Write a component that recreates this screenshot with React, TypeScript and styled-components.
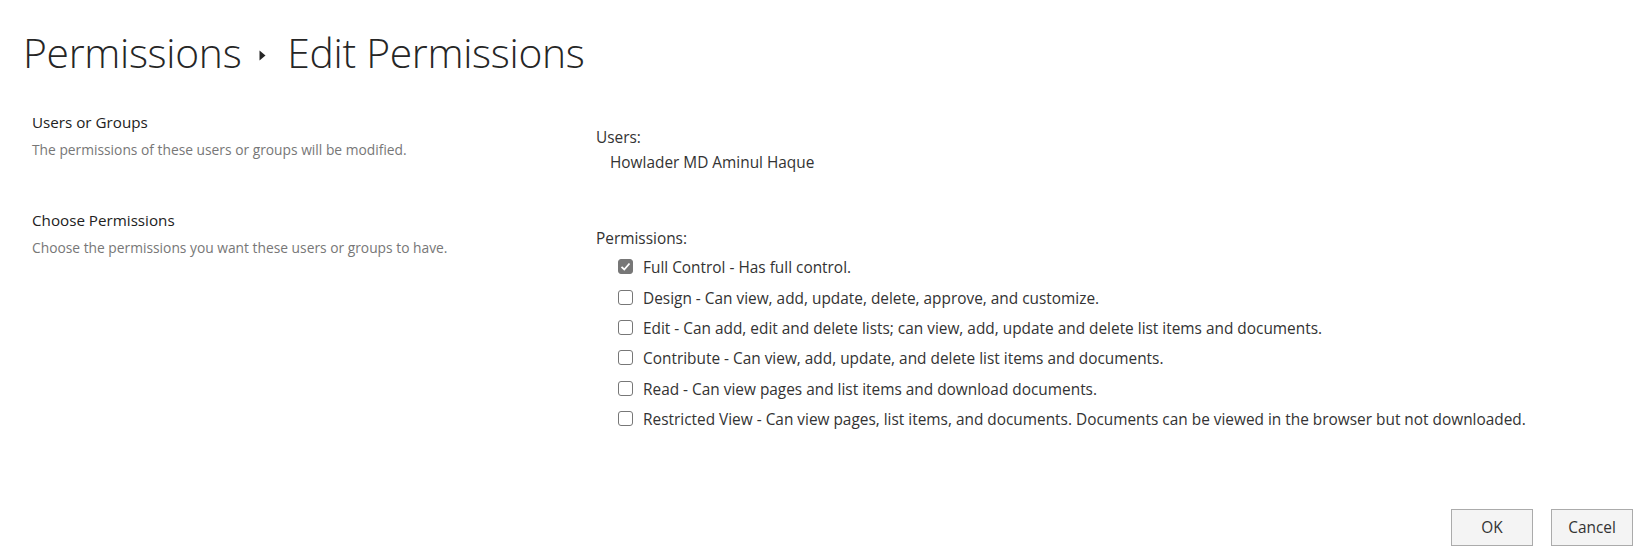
import React from 'react'
import styled, { createGlobalStyle } from 'styled-components'

const GlobalStyle = createGlobalStyle`
  html, body {
    margin: 0;
    padding: 0;
    background: #ffffff;
  }
  body {
    font-family: 'Segoe UI', 'Open Sans', 'Noto Sans', sans-serif;
    color: #333333;
  }
`

const Page = styled.div`
  width: 1639px;
  height: 551px;
  box-sizing: border-box;
  padding: 26px 6px 0 25px;
  display: flex;
  flex-direction: column;
`

const Title = styled.h1`
  margin: 0 0 0 -2px;
  font-weight: 300;
  font-size: 40.8px;
  line-height: 52px;
  color: #262626;
  display: flex;
  align-items: center;
  letter-spacing: -0.3px;
`

const Crumb = styled.span``

const Chevron = styled.svg`
  width: 7px;
  height: 11px;
  margin: 7px 21px 0 18px;
`

const Form = styled.div`
  display: grid;
  grid-template-columns: 571px 1fr;
  margin-top: 34px;
  row-gap: 36px;
`

const SectionInfo = styled.div`
  padding-left: 7px;
`

const SectionTitle = styled.div`
  font-size: 15.2px;
  line-height: 20px;
  color: #222222;
`

const SectionDesc = styled.div`
  margin-top: 8px;
  font-size: 13.8px;
  line-height: 19px;
  color: #777777;
`

const SectionBody = styled.div<{ $offset: number }>`
  padding-top: ${(p) => p.$offset}px;
  font-size: 15.4px;
  line-height: 22px;
`

const FieldLabel = styled.div`
  color: #333333;
`

const UserName = styled.div`
  padding-left: 14px;
  margin-top: 3px;
  color: #333333;
`

const OptionList = styled.div`
  display: flex;
  flex-direction: column;
  margin-top: 3px;
  padding-left: 22px;
`

const Option = styled.label`
  display: flex;
  align-items: center;
  height: 30.4px;
  gap: 10px;
  color: #333333;
`

const Box = styled.span<{ $checked: boolean }>`
  width: 15px;
  height: 15px;
  margin-bottom: 3px;
  box-sizing: border-box;
  border-radius: 3px;
  border: 1px solid #777777;
  background: ${(p) => (p.$checked ? '#777777' : '#ffffff')};
  display: flex;
  align-items: center;
  justify-content: center;
  flex: 0 0 auto;
`

const Footer = styled.div`
  margin-top: auto;
  margin-bottom: 5px;
  display: flex;
  justify-content: flex-end;
  gap: 18px;
`

const Button = styled.button`
  width: 82px;
  height: 37px;
  border: 1px solid #ababab;
  background: #f4f4f4;
  font-family: inherit;
  font-size: 15.4px;
  color: #333333;
  padding: 0;
`

const OPTIONS = [
  { label: 'Full Control - Has full control.', checked: true },
  { label: 'Design - Can view, add, update, delete, approve, and customize.', checked: false },
  {
    label: 'Edit - Can add, edit and delete lists; can view, add, update and delete list items and documents.',
    checked: false,
  },
  { label: 'Contribute - Can view, add, update, and delete list items and documents.', checked: false },
  { label: 'Read - Can view pages and list items and download documents.', checked: false },
  {
    label:
      'Restricted View - Can view pages, list items, and documents. Documents can be viewed in the browser but not downloaded.',
    checked: false,
  },
]

const App = () => (
  <>
    <GlobalStyle />
    <Page>
      <Title>
        <Crumb>Permissions</Crumb>
        <Chevron viewBox='0 0 7 11'>
          <path d='M0.5 0.5 L6.5 5.5 L0.5 10.5 Z' fill='#262626' />
        </Chevron>
        <Crumb>Edit Permissions</Crumb>
      </Title>
      <Form>
        <SectionInfo>
          <SectionTitle>Users or Groups</SectionTitle>
          <SectionDesc>The permissions of these users or groups will be modified.</SectionDesc>
        </SectionInfo>
        <SectionBody $offset={15}>
          <FieldLabel>Users:</FieldLabel>
          <UserName>Howlader MD Aminul Haque</UserName>
        </SectionBody>
        <SectionInfo>
          <SectionTitle>Choose Permissions</SectionTitle>
          <SectionDesc>Choose the permissions you want these users or groups to have.</SectionDesc>
        </SectionInfo>
        <SectionBody $offset={18}>
          <FieldLabel>Permissions:</FieldLabel>
          <OptionList>
            {OPTIONS.map((o) => (
              <Option key={o.label}>
                <Box $checked={o.checked}>
                  {o.checked && (
                    <svg width='11' height='11' viewBox='0 0 11 11'>
                      <path d='M1.5 5.8 L4.3 8.5 L9.5 2.5' stroke='#ffffff' strokeWidth='1.8' fill='none' />
                    </svg>
                  )}
                </Box>
                <span>{o.label}</span>
              </Option>
            ))}
          </OptionList>
        </SectionBody>
      </Form>
      <Footer>
        <Button>OK</Button>
        <Button>Cancel</Button>
      </Footer>
    </Page>
  </>
)

export default App
